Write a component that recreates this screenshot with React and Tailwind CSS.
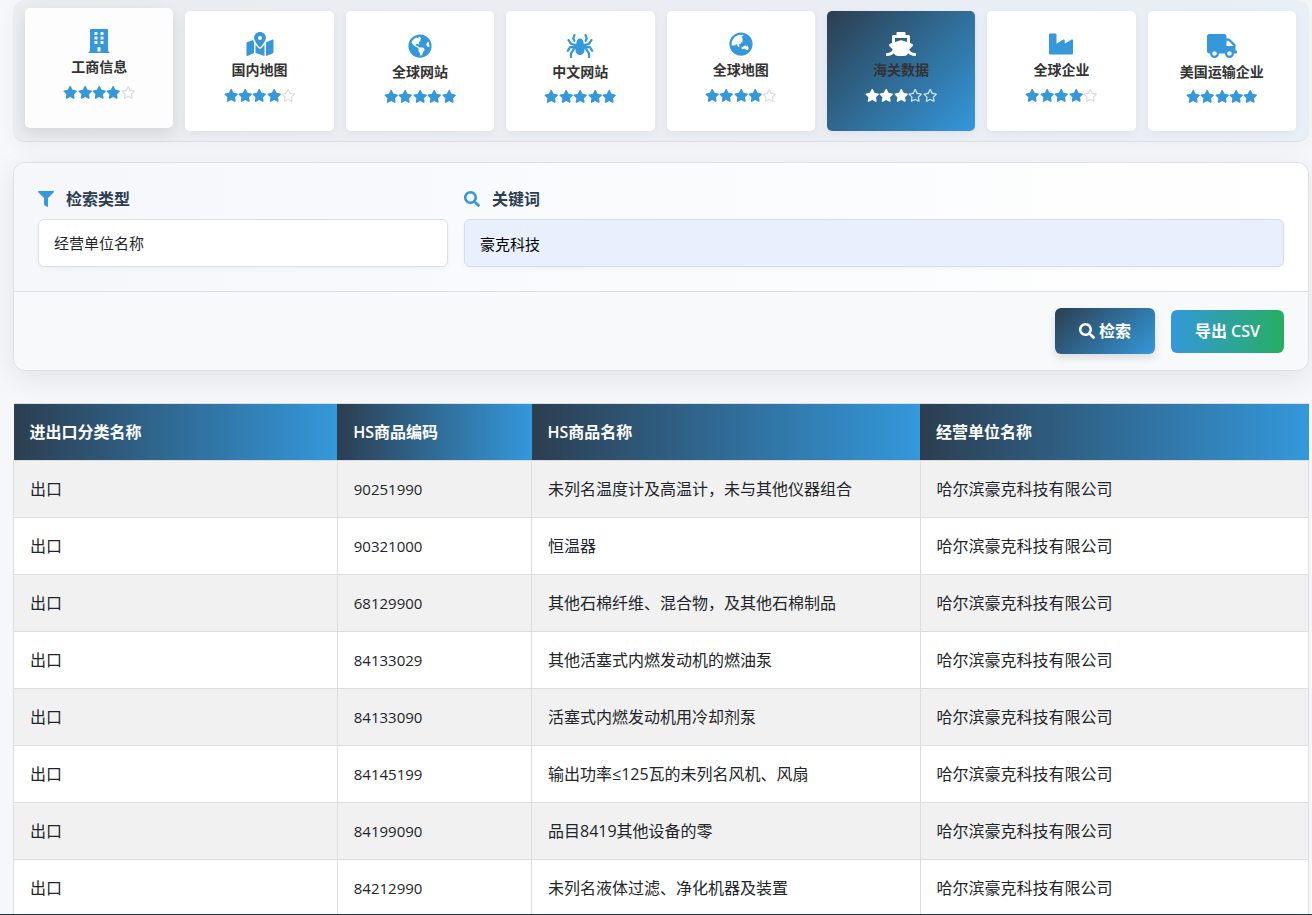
// src/App.jsx
import React, { useState } from "react";
import {
  FaBuilding,
  FaFilter,
  FaGlobeAmericas,
  FaGlobeAsia,
  FaIndustry,
  FaMapMarkedAlt,
  FaRegStar,
  FaSearch,
  FaShip,
  FaSpider,
  FaStar,
  FaTruck,
} from "react-icons/fa";

const sources = [
  { name: "工商信息", icon: FaBuilding, iconWidth: "w-6", stars: 4, raised: true },
  { name: "国内地图", icon: FaMapMarkedAlt, iconWidth: "w-7", stars: 4 },
  { name: "全球网站", icon: FaGlobeAmericas, iconWidth: "w-6", stars: 5 },
  { name: "中文网站", icon: FaSpider, iconWidth: "w-7", stars: 5 },
  { name: "全球地图", icon: FaGlobeAsia, iconWidth: "w-6", stars: 4 },
  { name: "海关数据", icon: FaShip, iconWidth: "w-[30px]", stars: 3 },
  { name: "全球企业", icon: FaIndustry, iconWidth: "w-6", stars: 4 },
  { name: "美国运输企业", icon: FaTruck, iconWidth: "w-[30px]", stars: 5 },
];

const columns = [
  { title: "进出口分类名称", width: "w-[25%]" },
  { title: "HS商品编码", width: "w-[15%]" },
  { title: "HS商品名称", width: "w-[30%]" },
  { title: "经营单位名称", width: "w-[30%]" },
];

const company = "哈尔滨豪克科技有限公司";

const records = [
  { type: "出口", code: "90251990", goods: "未列名温度计及高温计，未与其他仪器组合", company },
  { type: "出口", code: "90321000", goods: "恒温器", company },
  { type: "出口", code: "68129900", goods: "其他石棉纤维、混合物，及其他石棉制品", company },
  { type: "出口", code: "84133029", goods: "其他活塞式内燃发动机的燃油泵", company },
  { type: "出口", code: "84133090", goods: "活塞式内燃发动机用冷却剂泵", company },
  { type: "出口", code: "84145199", goods: "输出功率≤125瓦的未列名风机、风扇", company },
  { type: "出口", code: "84199090", goods: "品目8419其他设备的零", company },
  { type: "出口", code: "84212990", goods: "未列名液体过滤、净化机器及装置", company },
];

// Star rating under each source name
const Rating = ({ stars, active }) => (
  <span
    className={`flex w-[72px] items-center justify-between ${
      stars === 5 ? "h-[26px] pt-[3px]" : "h-[30px]"
    }`}
  >
    {[1, 2, 3, 4, 5].map((n) =>
      n <= stars ? (
        <FaStar
          key={n}
          className={`h-[13px] w-[15px] ${active ? "text-white" : "text-[#3498db]"}`}
        />
      ) : (
        <FaRegStar
          key={n}
          className={`h-[13px] w-[15px] ${active ? "text-white/80" : "text-[#dddddd]"}`}
        />
      )
    )}
  </span>
);

const SourceCard = ({ source, active, onSelect }) => {
  const Icon = source.icon;
  let look = "bg-white shadow-[0_2px_8px_rgba(0,0,0,0.05)]";
  if (active) {
    look = "bg-[linear-gradient(135deg,#2c3e50,#3498db)] shadow-[0_2px_8px_rgba(0,0,0,0.05)]";
  } else if (source.raised) {
    look = "bg-[#fdfdfe] -translate-y-[3px] shadow-[0_5px_15px_rgba(0,0,0,0.1)]";
  }

  return (
    <button
      type="button"
      onClick={onSelect}
      className={`flex h-[120px] min-w-0 flex-1 cursor-pointer flex-col items-center justify-center rounded-[5px] ${look}`}
    >
      <Icon
        className={`h-6 ${source.iconWidth} ${active ? "text-white" : "text-[#3498db]"}`}
      />
      <span className="mt-1 text-sm font-semibold whitespace-nowrap text-[#333333]">
        {source.name}
      </span>
      <Rating stars={source.stars} active={active} />
    </button>
  );
};

function App() {
  const [activeSource, setActiveSource] = useState("海关数据");
  const [searchType, setSearchType] = useState("company");
  const [keyword, setKeyword] = useState("豪克科技");

  return (
    <div className="flex h-screen flex-col overflow-hidden border-b border-[#1f3342] bg-[#f5f7fb] font-['Open_Sans','Noto_Sans_CJK_SC',sans-serif] text-base text-[#212529]">
      <main className="min-h-0 flex-1 overflow-hidden pr-[3px] pl-[13px]">
        {/* Data sources */}
        <nav className="flex gap-3 rounded-xl border-b border-[#dcdfe3] bg-[linear-gradient(90deg,#ebecf0,#e9eff6)] pt-[11px] pr-[13px] pb-[10px] pl-3 shadow-[0_4px_20px_rgba(0,0,0,0.04)]">
          {sources.map((source) => (
            <SourceCard
              key={source.name}
              source={source}
              active={source.name === activeSource}
              onSelect={() => setActiveSource(source.name)}
            />
          ))}
        </nav>

        {/* Search form */}
        <form
          onSubmit={(e) => e.preventDefault()}
          className="mt-5 overflow-hidden rounded-xl border border-[#dddfe1] bg-[#f8f9fb] shadow-[0_8px_30px_rgba(0,0,0,0.08)]"
        >
          <div className="grid grid-cols-[1fr_2fr] gap-4 border-b border-[#dddfe1] bg-[linear-gradient(90deg,#f5f7fb,#ffffff)] p-6">
            <div>
              <label
                htmlFor="search-type"
                className="mb-2 flex items-center gap-3 font-semibold text-[#2c3e50]"
              >
                <FaFilter className="text-[#3498db]" />
                检索类型
              </label>
              <select
                id="search-type"
                value={searchType}
                onChange={(e) => setSearchType(e.target.value)}
                className="h-12 w-full appearance-none rounded-md border border-[#dddfe1] bg-white px-[15px] text-[15px] shadow-[0_2px_5px_rgba(0,0,0,0.04)]"
              >
                <option value="company">经营单位名称</option>
                <option value="code">HS商品编码</option>
                <option value="goods">HS商品名称</option>
              </select>
            </div>
            <div>
              <label
                htmlFor="keyword"
                className="mb-2 flex items-center gap-3 font-semibold text-[#2c3e50]"
              >
                <FaSearch className="text-[#3498db]" />
                关键词
              </label>
              <input
                id="keyword"
                type="text"
                value={keyword}
                onChange={(e) => setKeyword(e.target.value)}
                className="h-12 w-full rounded-md border border-[#d9dde3] bg-[#e8f0fe] px-[15px] text-[15px] text-black shadow-[0_2px_5px_rgba(0,0,0,0.04)]"
              />
            </div>
          </div>

          <div className="flex items-center justify-end gap-4 px-6 py-4">
            <button
              type="submit"
              className="flex h-[46px] cursor-pointer items-center gap-1 rounded-md bg-[linear-gradient(135deg,#2c3e50,#3498db)] px-6 font-semibold text-white shadow-[0_4px_8px_rgba(0,0,0,0.12)]"
            >
              <FaSearch />
              检索
            </button>
            <button
              type="button"
              className="h-[43px] cursor-pointer rounded-md bg-[linear-gradient(90deg,#3498db,#27ae60)] px-6 font-semibold text-white"
            >
              导出 CSV
            </button>
          </div>
        </form>

        {/* Results */}
        <table className="mt-8 w-full table-fixed border-collapse">
          <thead>
            <tr className="border-t border-[#dddfe1]">
              {columns.map((column) => (
                <th
                  key={column.title}
                  className={`${column.width} bg-[linear-gradient(90deg,#2c3e50,#3498db)] px-4 py-4 text-left font-semibold text-white`}
                >
                  {column.title}
                </th>
              ))}
            </tr>
          </thead>
          <tbody>
            {records.map((record) => (
              <tr key={record.code} className="bg-white odd:bg-[#f1f1f1]">
                <td className="border border-[#dddddd] p-4">{record.type}</td>
                <td className="border border-[#dddddd] p-4 text-[15px] leading-6">
                  {record.code}
                </td>
                <td className="border border-[#dddddd] p-4">{record.goods}</td>
                <td className="border border-[#dddddd] p-4">{record.company}</td>
              </tr>
            ))}
          </tbody>
        </table>
      </main>
    </div>
  );
}

export default App;
